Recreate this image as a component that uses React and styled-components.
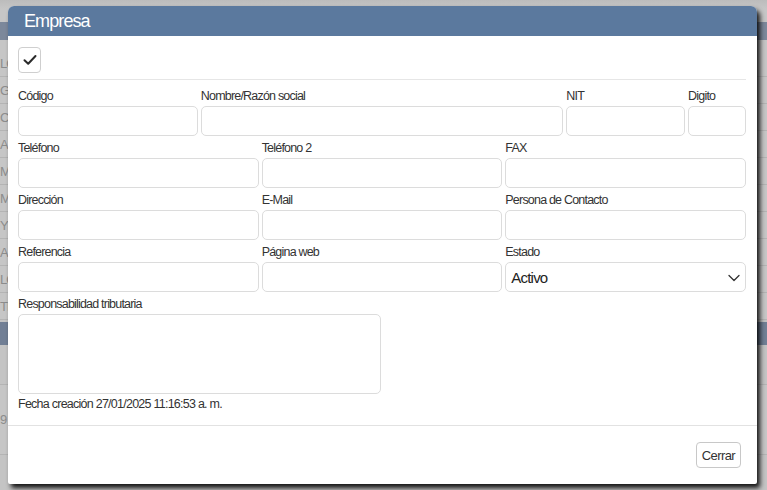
import React from "react";
import styled, { createGlobalStyle } from "styled-components";

const GlobalStyle = createGlobalStyle`
  * { box-sizing: border-box; }
  html, body { margin: 0; padding: 0; }
  body {
    width: 767px;
    height: 490px;
    overflow: hidden;
    font-family: "Liberation Sans", Arial, sans-serif;
    background: #c4c4c4;
  }
`;

const bgRows = ["LO", "GA", "CIS", "A.S", "MP", "MP", "Y", "A", "LO", "TR"];

const App = () => {
  return (
    <Page>
      <GlobalStyle />
      <Backdrop>
        <BackTop />
        <BackHead />
        <BackSpacer />
        {bgRows.map((t, i) => (
          <BackRow key={i}>
            <BackCell>{t}</BackCell>
          </BackRow>
        ))}
        <BackBand />
        <BackGap />
        <BackRow $tall>
          <BackCell>9</BackCell>
        </BackRow>
      </Backdrop>

      <Modal>
        <ModalHeader>Empresa</ModalHeader>
        <ModalBody>
          <Toolbar>
            <IconButton type="button" aria-label="Guardar">
              <svg width="14" height="12" viewBox="0 0 14 12" fill="none">
                <path
                  d="M1.5 6.2 L5.2 9.8 L12.5 2"
                  stroke="#2b2b2b"
                  strokeWidth="2"
                  strokeLinecap="round"
                  strokeLinejoin="round"
                />
              </svg>
            </IconButton>
          </Toolbar>
          <Divider />
          <FormGrid>
            <Field $span={3}>
              <Label>Código</Label>
              <Input />
            </Field>
            <Field $span={6}>
              <Label>Nombre/Razón social</Label>
              <Input />
            </Field>
            <Field $span={2}>
              <Label>NIT</Label>
              <Input />
            </Field>
            <Field $span={1}>
              <Label>Digito</Label>
              <Input />
            </Field>

            <Field $span={4}>
              <Label>Teléfono</Label>
              <Input />
            </Field>
            <Field $span={4}>
              <Label>Teléfono 2</Label>
              <Input />
            </Field>
            <Field $span={4}>
              <Label>FAX</Label>
              <Input />
            </Field>

            <Field $span={4}>
              <Label>Dirección</Label>
              <Input />
            </Field>
            <Field $span={4}>
              <Label>E-Mail</Label>
              <Input />
            </Field>
            <Field $span={4}>
              <Label>Persona de Contacto</Label>
              <Input />
            </Field>

            <Field $span={4}>
              <Label>Referencia</Label>
              <Input />
            </Field>
            <Field $span={4}>
              <Label>Página web</Label>
              <Input />
            </Field>
            <Field $span={4}>
              <Label>Estado</Label>
              <SelectBox>
                <span>Activo</span>
                <svg width="12" height="8" viewBox="0 0 12 8" fill="none">
                  <path
                    d="M1 1.5 L6 6.5 L11 1.5"
                    stroke="#333"
                    strokeWidth="1.3"
                    strokeLinecap="round"
                    strokeLinejoin="round"
                  />
                </svg>
              </SelectBox>
            </Field>

            <Field $span={6}>
              <Label>Responsabilidad tributaria</Label>
              <TextArea />
            </Field>
          </FormGrid>
          <Created>Fecha creación 27/01/2025 11:16:53 a. m.</Created>
        </ModalBody>
        <ModalFooter>
          <Button type="button">Cerrar</Button>
        </ModalFooter>
      </Modal>
    </Page>
  );
};

export default App;

const Page = styled.div`
  position: relative;
  width: 767px;
  height: 490px;
  overflow: hidden;
  background: #c4c4c4;
`;

const Backdrop = styled.div`
  display: flex;
  flex-direction: column;
  width: 100%;
  height: 100%;
`;

const BackTop = styled.div`
  height: 22px;
  background: linear-gradient(#bcbcbc, #c6c6c6 40%);
`;

const BackHead = styled.div`
  height: 18px;
  background: #7c889b;
`;

const BackSpacer = styled.div`
  height: 10px;
  background: #c6c6c6;
`;

const BackRow = styled.div`
  display: flex;
  align-items: center;
  height: ${(p) => (p.$tall ? "70px" : "27px")};
  border-bottom: 1px solid #b4b4b4;
  background: #c6c6c6;
`;

const BackCell = styled.span`
  display: block;
  width: 8px;
  overflow: hidden;
  white-space: nowrap;
  font-size: 13px;
  letter-spacing: -1px;
  color: #8c8c8c;
`;

const BackBand = styled.div`
  height: 23px;
  margin-top: 2px;
  background: #717f95;
`;

const BackGap = styled.div`
  height: 40px;
  border-bottom: 1px solid #b4b4b4;
  background: #c4c4c4;
`;

const Modal = styled.div`
  position: absolute;
  top: 6px;
  left: 8px;
  width: 749px;
  height: 478px;
  display: flex;
  flex-direction: column;
  background: #fff;
  border-radius: 6px 6px 2px 2px;
  box-shadow: 3px 4px 5px rgba(0, 0, 0, 0.9);
`;

const ModalHeader = styled.div`
  height: 30px;
  display: flex;
  align-items: center;
  padding-left: 16px;
  background: #5b799e;
  border-radius: 6px 6px 0 0;
  color: #fff;
  font-size: 18px;
  letter-spacing: -0.9px;
`;

const ModalBody = styled.div`
  padding: 11px 11px 13px 10px;
`;

const Toolbar = styled.div`
  display: flex;
  gap: 4px;
`;

const IconButton = styled.button`
  width: 23px;
  height: 26px;
  padding: 0;
  display: flex;
  align-items: center;
  justify-content: center;
  background: #fff;
  border: 1px solid #cfcfcf;
  border-radius: 4px;
`;

const Divider = styled.div`
  height: 1px;
  margin: 6px 0 8px;
  background: #e6e6e6;
`;

const FormGrid = styled.div`
  display: grid;
  grid-template-columns: repeat(12, 1fr);
  column-gap: 3px;
`;

const Field = styled.div`
  grid-column: span ${(p) => p.$span};
  display: flex;
  flex-direction: column;
  margin-bottom: 4px;

  &:last-child {
    margin-bottom: 0;
  }
`;

const Label = styled.label`
  height: 16px;
  line-height: 16px;
  margin-bottom: 2px;
  font-size: 12.5px;
  letter-spacing: -0.8px;
  color: #333;
  white-space: nowrap;
`;

const Input = styled.input`
  height: 30px;
  width: 100%;
  padding: 0 6px;
  border: 1px solid #dcdcdc;
  border-radius: 5px;
  background: #fff;
  font-family: inherit;
  font-size: 13px;
  outline: none;
`;

const SelectBox = styled.div`
  height: 30px;
  display: flex;
  align-items: center;
  justify-content: space-between;
  padding: 1px 5px 0 5px;
  border: 1px solid #dcdcdc;
  border-radius: 5px;
  font-size: 15px;
  letter-spacing: -0.8px;
  color: #222;
`;

const TextArea = styled.textarea`
  width: 100%;
  height: 80px;
  resize: none;
  border: 1px solid #dcdcdc;
  border-radius: 5px;
  font-family: inherit;
  outline: none;
`;

const Created = styled.div`
  height: 16px;
  line-height: 16px;
  margin-top: 2px;
  font-size: 12.5px;
  letter-spacing: -0.75px;
  color: #333;
`;

const ModalFooter = styled.div`
  display: flex;
  justify-content: flex-end;
  padding: 16px 16px;
  border-top: 1px solid #e2e2e2;
`;

const Button = styled.button`
  height: 26px;
  padding: 0 5px;
  background: #fff;
  border: 1px solid #c8c8c8;
  border-radius: 4px;
  font-family: inherit;
  font-size: 13px;
  letter-spacing: -0.6px;
  color: #333;
`;
